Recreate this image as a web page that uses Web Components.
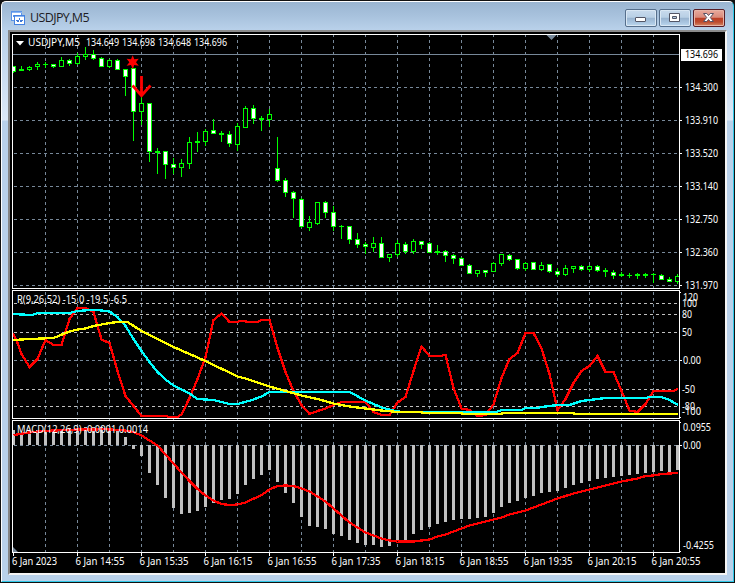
<!DOCTYPE html>
<html lang="en"><head><meta charset="utf-8"><title>USDJPY,M5</title>
<style>html,body{margin:0;background:#fff}body{width:737px;height:583px;overflow:hidden}</style></head>
<body>
<chart-window>
  <window-title slot="title">USDJPY,M5
    <caption-button slot="buttons" kind="min"></caption-button>
    <caption-button slot="buttons" kind="max"></caption-button>
    <caption-button slot="buttons" kind="close"></caption-button>
  </window-title>
  <price-chart></price-chart>
</chart-window>
<script>
class ChartWindow extends HTMLElement{
  constructor(){super();this.attachShadow({mode:'open'}).innerHTML=`<style>
  :host{display:block;width:735px;height:583px;box-sizing:border-box;background:#111;padding:1px 1px 1px 1px;}
  .frame{box-sizing:border-box;height:581px;border:1px solid #fff;border-right-color:#2ec8e8;border-bottom-color:#2ec8e8;border-radius:5px 5px 0 0;
   padding:0 6px 6px;display:grid;grid-template-rows:28px 1fr;
   background:linear-gradient(#9ab5d1 0,#a8c2dd 14px,#b9d1ea 28px,#dce8f6 118px,#b9d1ea 119px)}
  .client{box-sizing:border-box;border:2px solid;border-color:#8b8b8b #f4f4f4 #f4f4f4 #858585;background:#000;overflow:hidden}
  </style><div class="frame"><slot name="title"></slot><div class="client"><slot></slot></div></div>`}
}
class WindowTitle extends HTMLElement{
  constructor(){super();this.attachShadow({mode:'open'}).innerHTML=`<style>
  :host{display:flex;height:28px;align-items:flex-start;font:12.5px "Open Sans","Noto Sans",sans-serif;color:#1c1c24}
  .icon{margin:9px 4px 0 3px;flex:none}
  .name{white-space:nowrap;line-height:18px;margin-top:7px;letter-spacing:-.62px;flex:1}
  .buttons{display:flex;gap:2px;margin-top:7px;margin-right:2px}
  </style><svg class="icon" width="15" height="15" shape-rendering="crispEdges">
  <rect x=".5" y=".5" width="10" height="9" fill="#fff" stroke="#5a94e8"/><path d="M1 1.5h10" stroke="#8ab6f4" stroke-width="1"/><path d="M2.5 6v-2M4.5 7V4" stroke="#5a94e8"/>
  <rect x="3.5" y="4.500" width="10" height="9" fill="#fff" stroke="#4481e0"/><path d="M4 5.500h9" stroke="#8ab6f4" stroke-width="1"/><path d="M5 9l1 0 1 2 1.500-3 1.500 3 1.500-2" fill="none" stroke="#3f79d5"/></svg>
  <span class="name"><slot></slot></span><div class="buttons"><slot name="buttons"></slot></div>`}
}
class CaptionButton extends HTMLElement{
  connectedCallback(){
   const kind=this.getAttribute('kind');
   const glyph={
    min:'<rect x="9.500" y="7.500" width="10" height="4" rx=".5" fill="#fff" stroke="#535666"/>',
    max:'<path d="M9.500 3.500h10v8h-10zM12.500 6.500v2h4v-2z" fill="#fff" fill-rule="evenodd" stroke="#535666"/>',
    close:'<path d="M9.500 3.500h3.300l1.700 2 1.700-2h3.300l-3.200 4 3.200 4h-3.300l-1.700-2-1.700 2h-3.300l3.200-4z" fill="#fff" stroke="#565164"/>'}[kind];
   (this.shadowRoot||this.attachShadow({mode:'open'})).innerHTML=`<style>
   :host{display:block;box-sizing:border-box;width:32px;height:18px;border:1px solid #566f8c;border-radius:2px;
   background:linear-gradient(#c9dbed 0,#b8cfe5 46%,#98b3cf 50%,#abc7e2 80%,#bcd8ee);box-shadow:inset 0 0 0 1px #d9e7f4}
   :host([kind=close]){border-color:#581d26;background:linear-gradient(#e9aa9d 0,#d98b7b 46%,#bd3e25 50%,#bd4b2e 75%,#d68b68);box-shadow:inset 0 0 0 1px #e7b4a7}
   svg{display:block}</style><svg width="30" height="16">${glyph}</svg>`}
}
/* [wick top, body top, body bottom, wick bottom, rising] in chart pixels, one every 8px */
const CANDLES=[[66,66,71,72,0],[66,69,70,70,1],[66,67,69,70,1],[62,64,66,69,1],[62,64,64,67,1],[64,64,66,67,0],[57,60,66,66,1],[59,60,63,65,0],[53,56,63,64,1],[47,54,56,59,1],
[50,54,58,59,0],[57,58,66,66,0],[59,60,66,67,1],[59,60,69,69,0],[69,69,76,95,0],[68,68,111,140,0],[97,103,111,124,1],[103,103,151,161,0],[148,151,152,173,0],[151,151,164,178,0],
[158,164,167,173,0],[159,163,167,176,1],[137,142,163,168,1],[132,141,142,151,1],[129,131,141,145,1],[119,130,133,133,0],[131,133,134,141,0],[131,134,143,146,0],[123,126,144,150,1],[106,108,127,127,1],
[105,108,118,123,0],[116,118,119,130,0],[109,114,119,126,1],[137,168,180,181,0],[178,180,192,196,0],[191,192,198,217,0],[198,199,226,227,0],[216,222,227,230,1],[202,202,223,224,1],[201,202,212,217,0],
[206,212,226,230,0],[225,226,226,238,0],[226,226,239,243,0],[233,239,244,247,0],[242,244,246,253,0],[237,243,247,251,1],[237,243,257,257,0],[254,254,257,261,1],[240,243,254,256,1],[242,244,251,253,0],
[239,241,251,253,1],[241,241,244,248,0],[242,243,252,252,0],[245,251,252,254,0],[250,251,255,261,0],[254,255,258,263,0],[257,258,265,265,0],[264,265,273,273,0],[270,270,273,276,1],[270,270,272,276,0],
[262,263,271,271,1],[254,254,263,265,1],[254,255,259,260,0],[259,259,268,269,0],[262,263,268,270,1],[262,262,269,269,0],[262,265,269,270,1],[264,264,271,272,0],[268,271,274,276,0],[265,268,274,275,1],
[266,266,268,272,1],[265,266,269,270,0],[265,266,269,271,1],[265,266,270,271,0],[268,270,271,276,0],[270,272,275,278,0],[272,274,275,276,0],[273,275,275,277,0],[273,274,275,278,0],[273,274,275,277,0],
[273,274,274,282,0],[274,275,279,279,0],[277,279,281,281,0],[274,276,281,283,1]];
const BARS=[430,433,431,430,430,430,429,428,428,427,427,427,428,430,437,449,456,473,485,498,508,514,513,511,507,503,500,499,494,485,479,475,470,482,493,503,517,526,527,529,534,536,540,543,545,545,547,546,541,540,534,530,527,524,522,520,519,519,518,517,513,507,503,501,498,496,493,492,491,488,485,483,481,479,478,477,476,475,474,473,472,471,472,470];
const SIGNAL='13,435 29,432.5 43,431 77,429.5 107,429.3 125,430.5 134,432.5 141,435.5 149,440.5 157,445.5 165,454.5 173,463.5 181,472.5 189,481 197,489 205,495.5 213,500.5 221,504 229,505 237,504.5 245,502.5 261,495 269,489.5 277,486 285,485.5 293,486 301,488.5 309,491.5 317,496.5 325,501.5 333,508.5 341,515.5 349,522.5 357,527.5 365,532.5 373,535.5 381,538.5 389,540.5 397,541.5 413,541.5 429,539.5 437,536.5 445,534.5 461,528.5 469,525.5 493,519.5 501,517.5 509,514.5 525,510.5 541,504.5 557,498.5 573,493.5 589,489.5 605,485.5 621,481.5 637,478.5 645,476 653,475.5 661,474 669,473.5 677.5,473';
const FAST='12.5,333 17,343 21,354 29,367 37,359 45,340 53,345 61,345 69,319 77,308 85,308 93,312 101,339.5 109,343 117,371 125,396 133,406 141,416 165,416 169,417 177,417 181,414.5 189,398 197,379 205,357 213,320 221,313.5 229,322 237,322 239,321 245,321 246,322 257,322 261,320 269,320 277,348 285,372 293,391 301,405 309,414 317,411 325,408.5 333,405 341,402 365,402 373,412 381,415 389,415 397,402.5 405,397 413,371 421,346.5 429,356 441,356 443,355 445,355 453,388 461,408.5 469,410 477,416 485,415 493,404.5 501,378 509,359 517,353 525,333 533,333 541,348.5 549,374 557,410 565,399 573,383 581,371 589,366 597,356 605,372 613,372 621,391 629,410.5 637,412 645,404 653,391 673,391 677.5,389';
const MID='12.500,314 21,314.5 32,315 37,313 69,313 77,311 90,310 97,310 109,311.500 117,317 125,326 133,339 141,351 149,362 157,372 165,379.5 173,385.5 189,393.5 197,399 213,400 229,404 237,404 250,400.5 261,396.5 269,392 349,392 365,400.5 381,407.5 397,411.5 405,412 496,412 501,410 521,410 525,408 537,408 541,407 557,405 569,405 581,401 597,399 605,398 645,398 649,397 661,397 669,400 677.5,405';
const SLOW='12.5,340 30,339 53,338 69,331.5 77,329.5 85,328.5 93,326 109,323 117,322 127,322 141,331 173,347 205,361 237,376.5 245,378.5 269,386.5 285,391 301,395.5 317,399 333,403.5 349,406.5 365,408.5 381,410.5 397,412 421,412 422,413 461,413 462,414 501,414 502,413 573,413 574,414 677.5,414';
class PriceChart extends HTMLElement{
 constructor(){super();
  const t=(s,x,y,w,f='#fff')=>`<text x="${x}" y="${y}" textLength="${w}" lengthAdjust="spacingAndGlyphs" fill="${f}">${s}</text>`;
  const r=(x,y,w,h,f)=>`<rect x="${x}" y="${y}" width="${w}" height="${h}" fill="${f}"/>`;
  const line=(p,c)=>`<polyline points="${p.split(' ').map(q=>{const[a,b]=q.split(',');return(+a+.5)+','+b}).join(' ')}" fill="none" stroke="${c}" stroke-width="2.3"/>`;
  let g='';
  for(let x=45;x<679;x+=32)g+=`<path d="M${x}.5 34V552" stroke="#778899" stroke-dasharray="3 3"/>`;
  for(const y of[87,120,153,186,219,252,285,360,445])g+=`<path d="M14 ${y}.5H679" stroke="#778899" stroke-dasharray="3 3"/>`;
  for(const y of[303,314,332,389,406])g+=`<path d="M14 ${y}.5H679" stroke="#c0c0c0" stroke-dasharray="3 3"/>`;
  g+=r(13,54,668,1,'#778899');
  CANDLES.forEach(([h,a,b,l,up],i)=>{const x=13+8*i;
   g+=r(x,h,1,l-h+1,'#0f0')+r(x-2,a,5,b-a+1,'#0f0');
   if(b-a>1)g+=r(x-1,a+1,3,b-a-1,up?'#000':'#fff')});
  BARS.forEach((y,i)=>{const x=12+8*i;g+=y<445?r(x,y,3,445-y,'#c0c0c0'):r(x,445,3,y-445,'#c0c0c0')});
  g+=line(FAST,'#f00')+line(MID,'#0ff')+line(SLOW,'#ff0')+line(SIGNAL,'#f00');
  let o='';
  for(const[y,h]of[[34,255],[290,129],[420,133]])o+=`<rect x="12.5" y="${y}.5" width="667" height="${h-1}" fill="none" stroke="#fff"/>`;
  for(const y of[87,120,153,186,219,252,285,360,445])o+=r(680,y,2,1,'#fff');
  for(const y of[292,417,422,551])o+=r(680,y,1,1,'#fff');
  for(let x=13;x<679;x+=64)o+=r(x,553,1,3,'#fff');
  let s=t('USDJPY,M5',28,46,52)+t('134.649',86,46,33)+t('134.698',122,46,33)+t('134.648',158,46,33)+t('134.696',194,46,33)
   +t('R(9,26,52) -15.0 -19.5 -6.5',17,303,110)+t('MACD(12,26,9) -0.0001 0.0014',17,433,131)
   +r(681,49,41,12,'#fff')+t('134.696',685,58,33,'#000');
  [['134.300',87],['133.910',120],['133.520',153],['133.140',186],['132.750',219],['132.360',252],['131.970',285]].forEach(([v,y])=>s+=t(v,685,y+4,33));
  s+=t('120',683,301,15)+t('100',682,307,15)+t('80',682,318,10)+t('50',682,336,10)+t('0.00',683,364,18)+t('-50',682,393,13)+t('-80',682,410,13)+t('-100',682,415,19)+t('0.0955',683,431,28)+t('0.00',683,449,18)+t('-0.4255',683,549,31);
  ['2023','14:55','15:35','16:15','16:55','17:35','18:15','18:55','19:35','20:15','20:55'].forEach((v,i)=>s+=t('6 Jan '+v,12+64*i-(i?.5:0),565,i?49:45));
  const star=Array.from({length:12},(_,k)=>{const a=k*Math.PI/6,d=k%2?3.3:7;return(132.7+d*Math.sin(a)).toFixed(1)+','+(62.2-d*Math.cos(a)).toFixed(1)}).join(' ');
  this.attachShadow({mode:'open'}).innerHTML=`<style>:host{display:block;height:541px}
  svg{display:block;font:10.5px "Noto Sans","Open Sans",sans-serif}</style>
  <svg width="715" height="541" viewBox="10 32 715 541">
  <clipPath id="plot"><rect x="13" y="34" width="666" height="519"/></clipPath>
  <g shape-rendering="crispEdges"><g clip-path="url(#plot)">${g}</g>${o}</g>
  <polygon points="${star}" fill="#f00"/>
  <path d="M141.500 76V95M132.500 85.500L141.500 95.500L150.500 85.500" fill="none" stroke="#f00" stroke-width="2.800"/><path d="M137 92.500h9l-4.500 5z" fill="#f00"/>
  <path d="M546.500 35h10l-5 5z M13 547v5h5z" fill="#778899"/><path d="M16 41h8l-4 4.500z" fill="#fff"/>
  ${s}</svg>`}
}
customElements.define('chart-window',ChartWindow);
customElements.define('window-title',WindowTitle);
customElements.define('caption-button',CaptionButton);
customElements.define('price-chart',PriceChart);
</script></body></html>
